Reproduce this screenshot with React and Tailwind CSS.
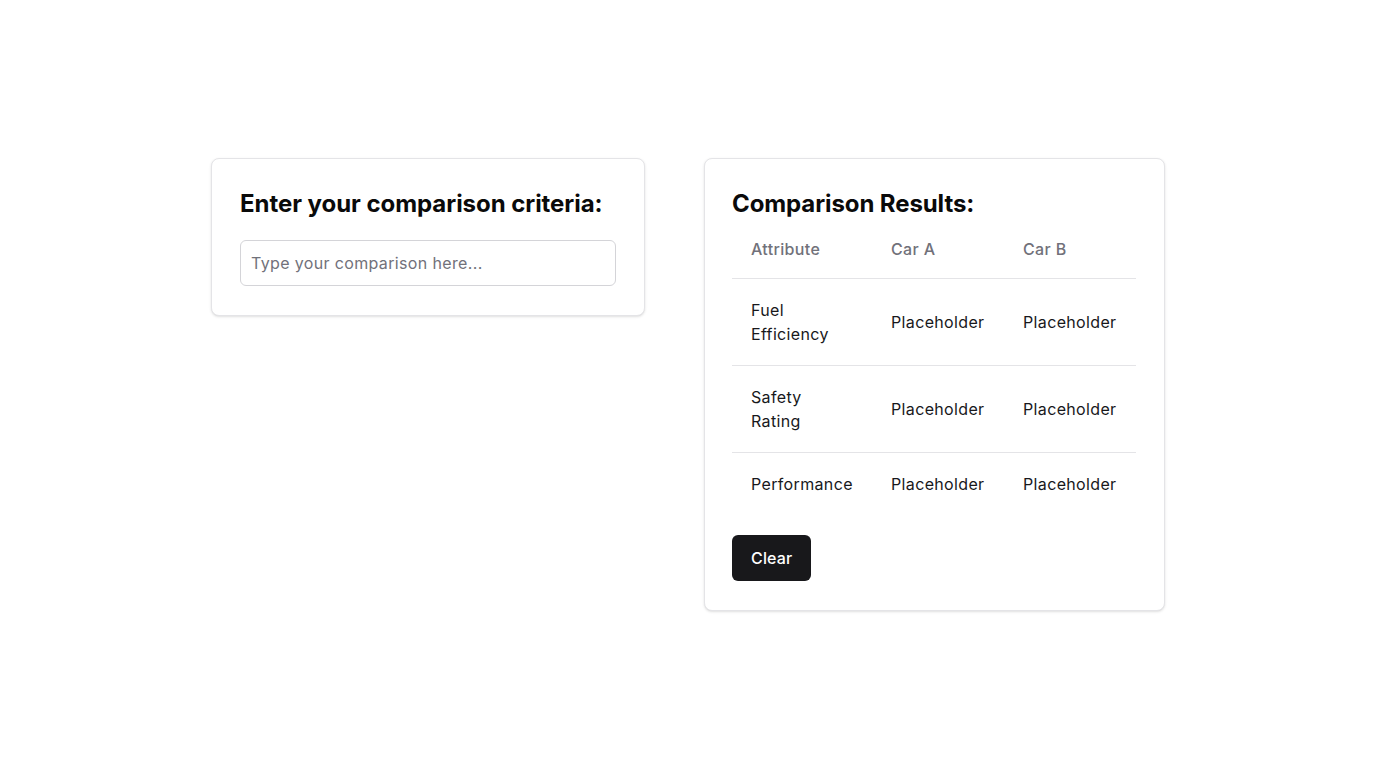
import React from "react";

const rows = [
  ["Fuel Efficiency", "Placeholder", "Placeholder"],
  ["Safety Rating", "Placeholder", "Placeholder"],
  ["Performance", "Placeholder", "Placeholder"],
];

export default function App() {
  return (
    <div
      className="min-h-screen w-full bg-white flex items-center justify-center text-[#0a0a0a] tracking-[0.022em]"
      style={{ fontFamily: "Inter, 'Noto Sans', sans-serif" }}
    >
      <div className="flex items-start gap-[59px]">
        <div className="w-[434px] rounded-lg border border-[#e4e4e7] bg-white px-7 pt-[29px] pb-[29px] shadow-sm">
          <h2 className="text-2xl font-bold leading-8 tracking-[-0.002em]">Enter your comparison criteria:</h2>
          <input
            type="text"
            placeholder="Type your comparison here..."
            className="mt-5 block h-[46px] w-full rounded-md border border-[#d4d4d8] px-2.5 text-base tracking-[0.022em] text-[#0a0a0a] placeholder:text-[#71717a] outline-none"
          />
        </div>

        <div className="w-[461px] rounded-lg border border-[#e4e4e7] bg-white pl-[27px] pr-7 pt-[29px] pb-[29px] shadow-sm">
          <h2 className="text-2xl font-bold leading-8 tracking-[-0.004em]">Comparison Results:</h2>
          <table className="w-full table-fixed border-collapse text-base">
            <colgroup>
              <col className="w-[140px]" />
              <col className="w-[132px]" />
              <col />
            </colgroup>
            <thead>
              <tr className="border-b border-[#e4e4e7]">
                <th className="px-[19px] py-[17px] text-left font-medium leading-6 text-[#71717a]">Attribute</th>
                <th className="px-[19px] py-[17px] text-left font-medium leading-6 text-[#71717a]">Car A</th>
                <th className="px-[19px] py-[17px] text-left font-medium leading-6 text-[#71717a]">Car B</th>
              </tr>
            </thead>
            <tbody>
              {rows.map((r, i) => (
                <tr key={i} className={i < rows.length - 1 ? "border-b border-[#e4e4e7]" : ""}>
                  {r.map((c, j) => (
                    <td key={j} className="px-[19px] py-[19px] align-middle leading-6 text-[#18181b]">
                      {c}
                    </td>
                  ))}
                </tr>
              ))}
            </tbody>
          </table>
          <button className="mt-5 h-[46px] rounded-md bg-[#18181b] px-[19px] text-base font-medium tracking-[0.01em] text-white">
            Clear
          </button>
        </div>
      </div>
    </div>
  );
}
